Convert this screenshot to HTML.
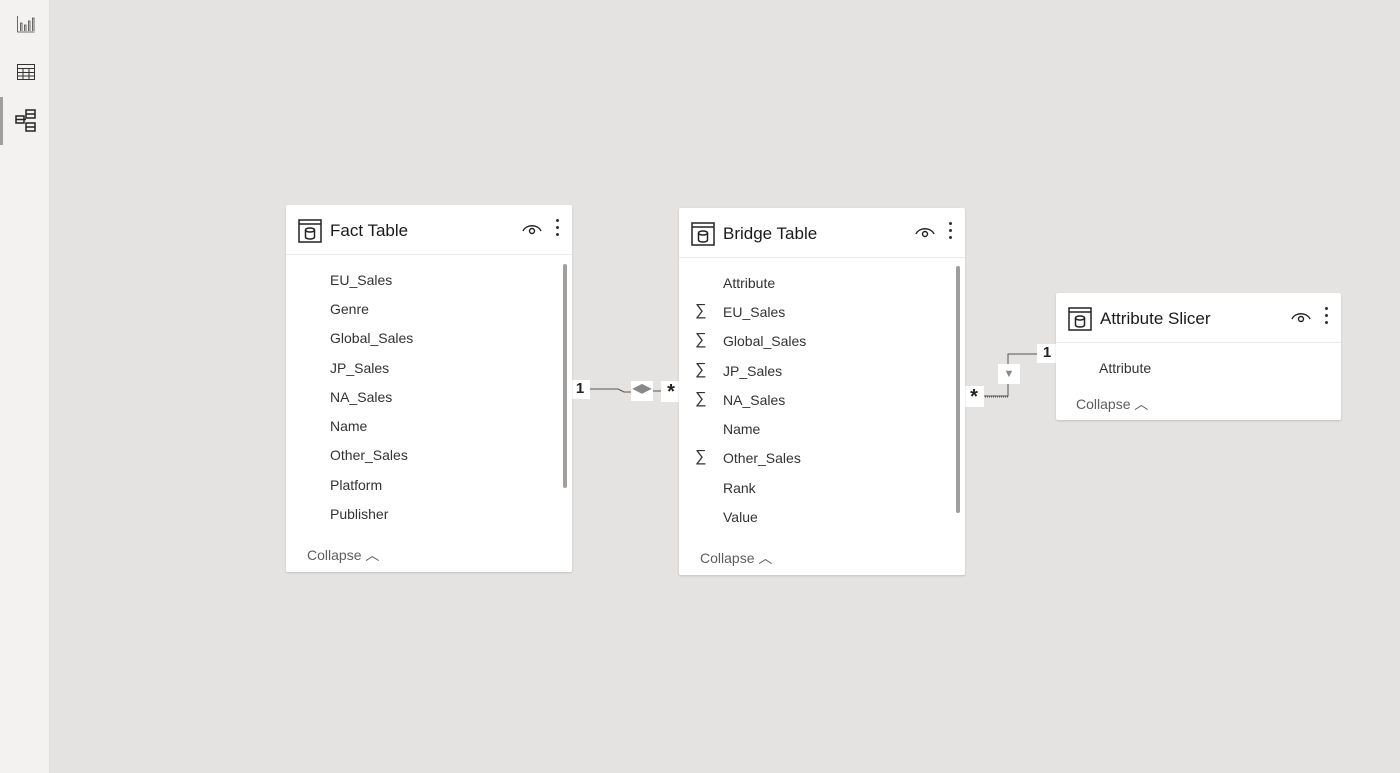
<!DOCTYPE html><html><head><style>
body{margin:0;width:1400px;height:773px;background:#e5e3e1;font-family:"Liberation Sans",sans-serif;position:relative;overflow:hidden}
.side{position:absolute;left:0;top:0;width:49px;height:773px;background:#f3f2f1;border-right:1px solid #e0dedc}
.card{position:absolute;background:#fff;box-shadow:0 1px 2px rgba(0,0,0,.15);border-radius:2px}
.hd{height:49px;border-bottom:1px solid #ebebeb;position:relative}
.ti{position:absolute;left:44px;top:16px;font-size:17px;color:#1b1a19}
.ic{position:absolute;left:12px;top:14px}
.eye{position:absolute;top:17px}
.dots{position:absolute;top:14px;width:3px}
.dots i{display:block;width:3px;height:3px;background:#333;border-radius:50%;margin-bottom:4px}
.row{position:absolute;font-size:14px;color:#333}
.sig{position:absolute;font-size:16px;color:#333}
.col{position:absolute;font-size:14px;color:#605e5c}
.sb{position:absolute;width:4px;background:#a19f9d;border-radius:2px}
.lbl{position:absolute;background:#fff;font-size:15px;font-weight:bold;color:#222;text-align:center}
</style></head><body>
<div class="side">
<svg style="position:absolute;left:16px;top:14px" width="20" height="20" viewBox="0 0 20 20" fill="none" stroke="#444" stroke-width="0.8"><path d="M1.5 2v16h17"/><path d="M4.5 17V9h1.5v8M8.5 17v-6h1.5v6M12.5 17V7h1.5v10M16.5 17V4h1.5v13"/></svg>
<svg style="position:absolute;left:16px;top:62px" width="20" height="20" viewBox="0 0 20 20" fill="none" stroke="#333" stroke-width="1"><rect x="1.5" y="2.5" width="17" height="15"/><path d="M1.5 6.5h17M1.5 10.5h17M1.5 14h17M7 6.5v11M13 6.5v11"/></svg>
<div style="position:absolute;left:0;top:97px;width:3px;height:48px;background:#a19f9d"></div>
<svg style="position:absolute;left:14px;top:108px" width="24" height="26" viewBox="0 0 24 26" fill="none" stroke="#222" stroke-width="1.5"><rect x="2" y="8" width="8" height="7"/><rect x="12" y="2" width="9" height="8"/><rect x="12" y="15" width="9" height="8"/><path d="M2 11.5h8M12 6h9M12 19h9M10 11.5h2"/></svg>
</div>

<svg style="position:absolute;left:0;top:0" width="1400" height="773"><g fill="none" stroke="#555" stroke-width="1"><path d="M590 389h28l6 3h8"/><path d="M652 391h10"/><path d="M983 396h25v-42h30" /><path d="M983 397h25" stroke-dasharray="1 1"/></g></svg>
<div class="lbl" style="left:570px;top:380px;width:20px;height:19px">1</div>
<div class="lbl" style="left:631px;top:381px;width:22px;height:20px;font-size:12px;color:#888">◀▶</div>
<div class="lbl" style="left:661px;top:381px;width:20px;height:21px;font-size:20px">*</div>
<div class="lbl" style="left:964px;top:386px;width:20px;height:21px;font-size:20px">*</div>
<div class="lbl" style="left:998px;top:364px;width:22px;height:20px;font-size:11px;color:#888;line-height:20px">▼</div>
<div class="lbl" style="left:1037px;top:344px;width:20px;height:19px">1</div>

<div class="card" style="left:286px;top:205px;width:286px;height:367px">
<div class="hd"><svg class="ic" width="24" height="24" viewBox="0 0 24 24" fill="none" stroke="#222" stroke-width="1.5"><rect x="1" y="1" width="22" height="22"/><path d="M1 5h22"/><ellipse cx="12" cy="11" rx="4.5" ry="2"/><path d="M7.5 11v7c0 1.2 2 2 4.5 2s4.5-.8 4.5-2v-7"/></svg><div class="ti">Fact Table</div>
<svg class="eye" style="left:236px" width="20" height="14" viewBox="0 0 20 14" fill="none" stroke="#222" stroke-width="1.4"><path d="M1 9c3-7 15-7 18 0"/><circle cx="10" cy="9" r="2.5"/></svg>
<div class="dots" style="left:270px"><i></i><i></i><i></i></div></div>
<div class="sb" style="left:277px;top:59px;height:224px"></div>
<div class="row" style="left:44px;top:67px">EU_Sales</div><div class="row" style="left:44px;top:96px">Genre</div><div class="row" style="left:44px;top:125px">Global_Sales</div><div class="row" style="left:44px;top:155px">JP_Sales</div><div class="row" style="left:44px;top:184px">NA_Sales</div><div class="row" style="left:44px;top:213px">Name</div><div class="row" style="left:44px;top:242px">Other_Sales</div><div class="row" style="left:44px;top:272px">Platform</div><div class="row" style="left:44px;top:301px">Publisher</div>
<div class="col" style="left:21px;top:340px">Collapse ︿</div></div>

<div class="card" style="left:679px;top:208px;width:286px;height:367px">
<div class="hd"><svg class="ic" width="24" height="24" viewBox="0 0 24 24" fill="none" stroke="#222" stroke-width="1.5"><rect x="1" y="1" width="22" height="22"/><path d="M1 5h22"/><ellipse cx="12" cy="11" rx="4.5" ry="2"/><path d="M7.5 11v7c0 1.2 2 2 4.5 2s4.5-.8 4.5-2v-7"/></svg><div class="ti">Bridge Table</div>
<svg class="eye" style="left:236px" width="20" height="14" viewBox="0 0 20 14" fill="none" stroke="#222" stroke-width="1.4"><path d="M1 9c3-7 15-7 18 0"/><circle cx="10" cy="9" r="2.5"/></svg>
<div class="dots" style="left:270px"><i></i><i></i><i></i></div></div>
<div class="sb" style="left:277px;top:58px;height:247px"></div>
<div class="row" style="left:44px;top:67px">Attribute</div>
<div class="sig" style="left:16px;top:94px">∑</div><div class="row" style="left:44px;top:96px">EU_Sales</div>
<div class="sig" style="left:16px;top:123px">∑</div><div class="row" style="left:44px;top:125px">Global_Sales</div>
<div class="sig" style="left:16px;top:153px">∑</div><div class="row" style="left:44px;top:155px">JP_Sales</div>
<div class="sig" style="left:16px;top:182px">∑</div><div class="row" style="left:44px;top:184px">NA_Sales</div>
<div class="row" style="left:44px;top:213px">Name</div>
<div class="sig" style="left:16px;top:240px">∑</div><div class="row" style="left:44px;top:242px">Other_Sales</div>
<div class="row" style="left:44px;top:272px">Rank</div><div class="row" style="left:44px;top:301px">Value</div>
<div class="col" style="left:21px;top:340px">Collapse ︿</div></div>

<div class="card" style="left:1056px;top:293px;width:285px;height:127px">
<div class="hd"><svg class="ic" width="24" height="24" viewBox="0 0 24 24" fill="none" stroke="#222" stroke-width="1.5"><rect x="1" y="1" width="22" height="22"/><path d="M1 5h22"/><ellipse cx="12" cy="11" rx="4.5" ry="2"/><path d="M7.5 11v7c0 1.2 2 2 4.5 2s4.5-.8 4.5-2v-7"/></svg><div class="ti">Attribute Slicer</div>
<svg class="eye" style="left:235px" width="20" height="14" viewBox="0 0 20 14" fill="none" stroke="#222" stroke-width="1.4"><path d="M1 9c3-7 15-7 18 0"/><circle cx="10" cy="9" r="2.5"/></svg>
<div class="dots" style="left:269px"><i></i><i></i><i></i></div></div>
<div class="row" style="left:43px;top:67px">Attribute</div>
<div class="col" style="left:20px;top:101px">Collapse ︿</div></div>
</body></html>
